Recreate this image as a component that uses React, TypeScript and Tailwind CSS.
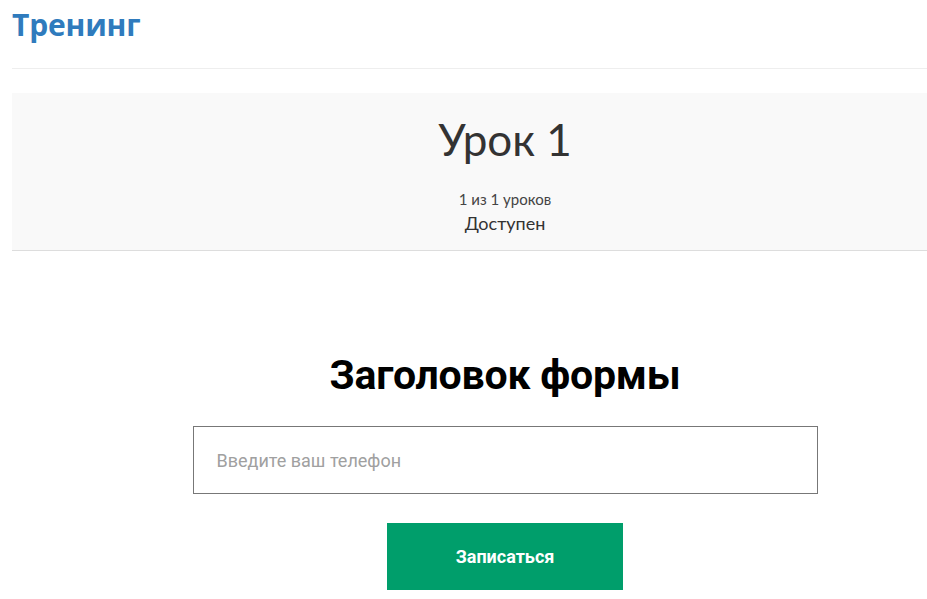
import React from 'react';

export default function App() {
  return (
    <div className="w-[927px] h-[599px] overflow-hidden bg-white">
      <div className="w-[986px] ml-[12px]">
        <header className="h-[69px] pt-[6px] border-b border-[#eeeeee]">
          <h1 className="text-[30px] leading-[38px] font-bold text-[#2f7bbd] tracking-[-0.2px] [font-family:'Open_Sans',sans-serif]">
            Тренинг
          </h1>
        </header>
        <section className="mt-[24px] h-[158px] bg-[#f9f9f9] border-b border-[#dddddd] flex flex-col items-center text-[#333333] [font-family:Lato,sans-serif]">
          <h2 className="mt-[18px] text-[44px] leading-[56px] font-normal">Урок 1</h2>
          <div className="mt-[23px] text-[15px] leading-[18px] text-[#444]">1 из 1 уроков</div>
          <div className="mt-[4px] text-[18px] leading-[22px]">Доступен</div>
        </section>
        <section className="flex flex-col items-center pt-[100px] [font-family:Roboto,sans-serif]">
          <h3 className="text-[41px] leading-[48px] font-bold text-black tracking-[-0.2px]">Заголовок формы</h3>
          <input
            type="text"
            placeholder="Введите ваш телефон"
            className="mt-[27px] w-[625px] h-[68px] border border-[#777777] px-[23px] text-[18px] text-[#333] placeholder:text-[#a0a0a0] outline-none"
          />
          <button
            type="button"
            className="mt-[29px] w-[236px] h-[67px] bg-[#009e6b] text-white text-[18px] font-bold"
          >
            Записаться
          </button>
        </section>
      </div>
    </div>
  );
}
